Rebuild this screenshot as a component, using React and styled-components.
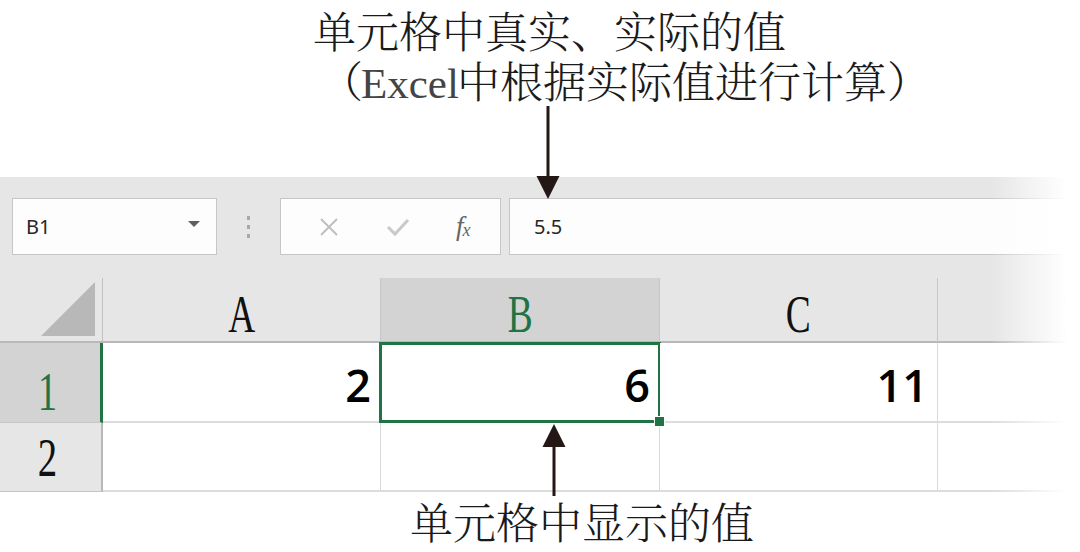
import React from "react";
import styled, { createGlobalStyle } from "styled-components";

const Global = createGlobalStyle`
  html, body { margin: 0; padding: 0; background: #fff; }
  body { width: 1080px; height: 552px; overflow: hidden; }
`;

const CJK = `"Noto Serif CJK SC", "Noto Sans CJK SC", "Liberation Serif", serif`;
const UI = `"Noto Sans", "Open Sans", "Liberation Sans", sans-serif`;

const Page = styled.div`
  position: relative;
  width: 1080px;
  height: 552px;
  overflow: hidden;
  background: #fff;
`;

const Annotation = styled.div`
  height: 177px;
  display: flex;
  flex-direction: column;
  font-family: ${CJK};
  font-size: 43px;
  font-weight: 300;
  color: #1a1a1a;
  line-height: 50px;
`;

const Line = styled.div`
  padding-left: ${(p) => p.$indent}px;
  margin-top: ${(p) => p.$top || 0}px;
  white-space: nowrap;
`;

const Latin = styled.span`
  font-family: "Liberation Serif", serif;
  font-weight: 400;
  color: #444;
  margin: 0 -2px 0 -2px;
`;

const Toolbar = styled.div`
  height: 101px;
  box-sizing: border-box;
  background: #e6e6e6;
  display: flex;
  align-items: flex-start;
  padding: 21px 0 0 12px;
  font-family: ${UI};
`;

const NameBox = styled.div`
  box-sizing: border-box;
  width: 205px;
  height: 57px;
  background: #fdfdfd;
  border: 1px solid #c6c6c6;
  display: flex;
  align-items: center;
  justify-content: space-between;
  padding: 0 16px 0 13px;
  font-size: 20px;
  color: #262626;
`;

const Caret = styled.span`
  width: 0;
  height: 0;
  border-left: 6px solid transparent;
  border-right: 6px solid transparent;
  border-top: 6px solid #5f5f5f;
  margin-top: -6px;
`;

const Grip = styled.div`
  width: 63px;
  height: 57px;
  display: flex;
  flex-direction: column;
  align-items: center;
  justify-content: center;
  gap: 5px;
  & > span {
    width: 3px;
    height: 4px;
    background: #a9a9a9;
  }
`;

const Buttons = styled.div`
  box-sizing: border-box;
  width: 221px;
  height: 57px;
  background: #fdfdfd;
  border: 1px solid #c6c6c6;
  display: flex;
  align-items: center;
  justify-content: space-around;
  padding: 0 8px 0 14px;
`;

const Fx = styled.span`
  font-family: "Liberation Serif", serif;
  font-style: italic;
  font-size: 27px;
  color: #666;
  letter-spacing: -1px;
  & > sub {
    font-size: 18px;
    vertical-align: -1px;
  }
`;

const FormulaBox = styled.div`
  box-sizing: border-box;
  flex: 1;
  height: 57px;
  margin-left: 8px;
  background: #fdfdfd;
  border: 1px solid #c6c6c6;
  border-right: none;
  display: flex;
  align-items: center;
  padding-left: 24px;
  font-size: 20px;
  color: #262626;
`;

const Grid = styled.div`
  display: grid;
  grid-template-columns: 103px 278px 279px 278px 278px;
  grid-template-rows: 65px 80px 69px;
`;

const Corner = styled.div`
  background: #e6e6e6;
  border-right: 1px solid #c0c0c0;
  border-bottom: 2px solid #b8b8b8;
  box-sizing: border-box;
  display: flex;
  align-items: flex-end;
  justify-content: flex-end;
  padding: 0 7px 5px 0;
  & > i {
    width: 54px;
    height: 54px;
    background: #b8b8b8;
    clip-path: polygon(100% 0, 100% 100%, 0 100%);
  }
`;

const ColHead = styled.div`
  box-sizing: border-box;
  background: ${(p) => (p.$active ? "#d3d3d3" : "#e6e6e6")};
  border-right: 1px solid #c6c6c6;
  border-bottom: 2px solid #b8b8b8;
  display: flex;
  align-items: center;
  justify-content: center;
  color: ${(p) => (p.$active ? "#217346" : "#111")};
  font-family: "Liberation Serif", serif;
  font-size: 52px;
  padding-top: 10px;
`;

const Narrow = styled.span`
  display: inline-block;
  transform: scaleX(0.72);
`;

const RowHead = styled.div`
  box-sizing: border-box;
  background: ${(p) => (p.$active ? "#d3d3d3" : "#e6e6e6")};
  border-right: ${(p) => (p.$active ? "3px solid #217346" : "2px solid #b8b8b8")};
  border-bottom: 1px solid #c6c6c6;
  display: flex;
  align-items: center;
  justify-content: center;
  padding-top: ${(p) => (p.$active ? 18 : 2)}px;
  padding-right: 6px;
  color: ${(p) => (p.$active ? "#217346" : "#111")};
  font-family: "Liberation Serif", serif;
  font-size: 54px;
`;

const Cell = styled.div`
  position: relative;
  box-sizing: border-box;
  background: #fff;
  border-right: 1px solid #d9d9d9;
  border-bottom: 2px solid #dcdcdc;
  display: flex;
  align-items: center;
  justify-content: flex-end;
  padding: 4px 9px 0 0;
  font-family: "Open Sans", "Liberation Sans", sans-serif;
  font-size: 45px;
  font-weight: 600;
  color: #000;
  ${(p) =>
    p.$selected &&
    `
    &::after {
      content: "";
      position: absolute;
      left: -2px;
      top: -1px;
      right: -2px;
      bottom: -2px;
      border: 3px solid #217346;
    }
    &::before {
      content: "";
      position: absolute;
      right: -6px;
      bottom: -6px;
      width: 9px;
      height: 9px;
      background: #217346;
      border: 1px solid #fff;
      z-index: 2;
    }
  `}
`;

const Caption = styled.div`
  padding: 4px 0 0 410px;
  font-family: ${CJK};
  font-size: 43px;
  font-weight: 300;
  line-height: 50px;
  color: #1a1a1a;
  white-space: nowrap;
`;

const Fade = styled.div`
  position: absolute;
  top: 170px;
  right: 0;
  width: 90px;
  height: 340px;
  background: linear-gradient(to right, rgba(255, 255, 255, 0), #fff 85%);
  pointer-events: none;
`;

const Arrow = styled.svg`
  position: absolute;
  left: ${(p) => p.$x}px;
  top: ${(p) => p.$y}px;
  z-index: 5;
`;

export default function App() {
  return (
    <Page>
      <Global />
      <Annotation>
        <Line $indent={313} $top={5}>单元格中真实、实际的值</Line>
        <Line $indent={320} $top={0}>
          （<Latin>Excel</Latin>中根据实际值进行计算）
        </Line>
      </Annotation>
      <Toolbar>
        <NameBox>
          <span>B1</span>
          <Caret />
        </NameBox>
        <Grip>
          <span />
          <span />
          <span />
        </Grip>
        <Buttons>
          <svg width="22" height="22" viewBox="0 0 22 22">
            <path d="M3 3L19 19M19 3L3 19" stroke="#bdbdbd" strokeWidth="1.8" fill="none" />
          </svg>
          <svg width="26" height="22" viewBox="0 0 26 22">
            <path d="M3 11L10 18L23 4" stroke="#c9c9c9" strokeWidth="3" fill="none" />
          </svg>
          <Fx>
            f<sub>x</sub>
          </Fx>
        </Buttons>
        <FormulaBox>5.5</FormulaBox>
      </Toolbar>
      <Grid>
        <Corner>
          <i />
        </Corner>
        <ColHead><Narrow>A</Narrow></ColHead>
        <ColHead $active><Narrow>B</Narrow></ColHead>
        <ColHead><Narrow>C</Narrow></ColHead>
        <ColHead><Narrow>D</Narrow></ColHead>

        <RowHead $active><Narrow>1</Narrow></RowHead>
        <Cell>2</Cell>
        <Cell $selected>6</Cell>
        <Cell>11</Cell>
        <Cell />

        <RowHead><Narrow>2</Narrow></RowHead>
        <Cell />
        <Cell />
        <Cell />
        <Cell />
      </Grid>
      <Caption>单元格中显示的值</Caption>
      <Fade />
      <Arrow $x={535} $y={106} width="26" height="93" viewBox="0 0 26 93">
        <path d="M13 0V72" stroke="#231815" strokeWidth="3" />
        <path d="M1.5 70H24.5L13 93Z" fill="#231815" />
      </Arrow>
      <Arrow $x={541} $y={424} width="26" height="72" viewBox="0 0 26 72">
        <path d="M13 20V72" stroke="#231815" strokeWidth="3" />
        <path d="M13 0L24.5 23H1.5Z" fill="#231815" />
      </Arrow>
    </Page>
  );
}
